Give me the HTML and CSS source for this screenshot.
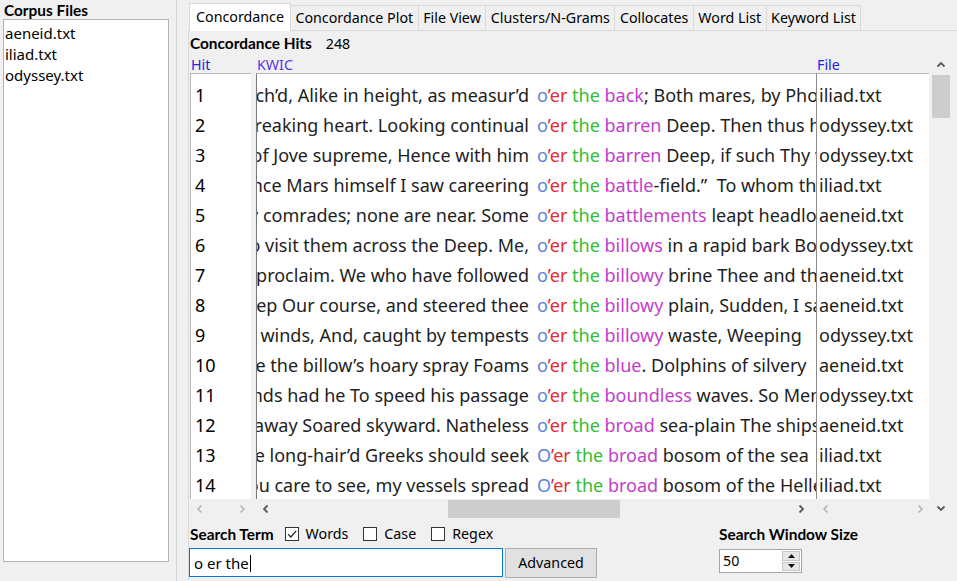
FILE: index.html
```html
<!DOCTYPE html>
<html>
<head>
<meta charset="utf-8">
<title>AntConc</title>
<link rel="stylesheet" href="styles.css">
</head>
<body>
<div class="app">
  <aside class="corpus">
    <div class="label">Corpus Files</div>
    <div class="file-list">
      <div class="file-item">aeneid.txt</div>
      <div class="file-item">iliad.txt</div>
      <div class="file-item">odyssey.txt</div>
    </div>
    <div class="label total">Total No.</div>
  </aside>
  <main class="main">
    <nav class="tabs">
      <div class="tab active">Concordance</div>
      <div class="tab">Concordance Plot</div>
      <div class="tab">File View</div>
      <div class="tab">Clusters/N-Grams</div>
      <div class="tab">Collocates</div>
      <div class="tab">Word List</div>
      <div class="tab">Keyword List</div>
    </nav>
    <section class="pane">
      <div class="hits"><span class="label">Concordance Hits</span><span class="hit-count">248</span></div>
      <div class="results">
        <div class="col col-hit">
          <div class="col-head">Hit</div>
          <div class="col-body">
            <div class="row">1</div><div class="row">2</div><div class="row">3</div><div class="row">4</div>
            <div class="row">5</div><div class="row">6</div><div class="row">7</div><div class="row">8</div>
            <div class="row">9</div><div class="row">10</div><div class="row">11</div><div class="row">12</div>
            <div class="row">13</div><div class="row">14</div><div class="row">15</div>
          </div>
          <div class="hscroll">
            <span class="sb-btn off"><svg width="7" height="10" viewBox="0 0 7 10"><path d="M5.5 1.5 L2 5 L5.5 8.5" fill="none" stroke="currentColor" stroke-width="1.5"/></svg></span>
            <span class="track"></span>
            <span class="sb-btn off"><svg width="7" height="10" viewBox="0 0 7 10"><path d="M1.5 1.5 L5 5 L1.5 8.5" fill="none" stroke="currentColor" stroke-width="1.5"/></svg></span>
          </div>
        </div>
        <div class="col col-kwic">
          <div class="col-head kwic-head">KWIC</div>
          <div class="col-body">
            <div class="kw-row"><span class="lc">so match’d, Alike in height, as measur’d</span><span class="rc"><span class="k1">o</span><span class="k2">’er</span> <span class="k3">the</span> <span class="k4">back</span>; Both mares, by Phoebus in Pieria bred</span></div>
            <div class="kw-row"><span class="lc">with breaking heart. Looking continual</span><span class="rc"><span class="k1">o</span><span class="k2">’er</span> <span class="k3">the</span> <span class="k4">barren</span> Deep. Then thus he spake</span></div>
            <div class="kw-row"><span class="lc">son of Jove supreme, Hence with him</span><span class="rc"><span class="k1">o</span><span class="k2">’er</span> <span class="k3">the</span> <span class="k4">barren</span> Deep, if such Thy will</span></div>
            <div class="kw-row"><span class="lc">Once Mars himself I saw careering</span><span class="rc"><span class="k1">o</span><span class="k2">’er</span> <span class="k3">the</span> <span class="k4">battle</span>-field.”&nbsp; To whom the</span></div>
            <div class="kw-row"><span class="lc">my comrades; none are near. Some</span><span class="rc"><span class="k1">o</span><span class="k2">’er</span> <span class="k3">the</span> <span class="k4">battlements</span> leapt headlong</span></div>
            <div class="kw-row"><span class="lc">to visit them across the Deep. Me,</span><span class="rc"><span class="k1">o</span><span class="k2">’er</span> <span class="k3">the</span> <span class="k4">billows</span> in a rapid bark Bore</span></div>
            <div class="kw-row"><span class="lc">proclaim. We who have followed</span><span class="rc"><span class="k1">o</span><span class="k2">’er</span> <span class="k3">the</span> <span class="k4">billowy</span> brine Thee and thy</span></div>
            <div class="kw-row"><span class="lc">Deep Our course, and steered thee</span><span class="rc"><span class="k1">o</span><span class="k2">’er</span> <span class="k3">the</span> <span class="k4">billowy</span> plain, Sudden, I saw</span></div>
            <div class="kw-row"><span class="lc">the winds, And, caught by tempests</span><span class="rc"><span class="k1">o</span><span class="k2">’er</span> <span class="k3">the</span> <span class="k4">billowy</span> waste, Weeping</span></div>
            <div class="kw-row"><span class="lc">where the billow’s hoary spray Foams</span><span class="rc"><span class="k1">o</span><span class="k2">’er</span> <span class="k3">the</span> <span class="k4">blue</span>. Dolphins of silvery</span></div>
            <div class="kw-row"><span class="lc">winds had he To speed his passage</span><span class="rc"><span class="k1">o</span><span class="k2">’er</span> <span class="k3">the</span> <span class="k4">boundless</span> waves. So Menelaus</span></div>
            <div class="kw-row"><span class="lc">away Soared skyward. Natheless</span><span class="rc"><span class="k1">o</span><span class="k2">’er</span> <span class="k3">the</span> <span class="k4">broad</span> sea-plain The ships</span></div>
            <div class="kw-row"><span class="lc">the long-hair’d Greeks should seek</span><span class="rc"><span class="k1">O</span><span class="k2">’er</span> <span class="k3">the</span> <span class="k4">broad</span> bosom of the sea</span></div>
            <div class="kw-row"><span class="lc">you care to see, my vessels spread</span><span class="rc"><span class="k1">O</span><span class="k2">’er</span> <span class="k3">the</span> <span class="k4">broad</span> bosom of the Hellespont</span></div>
          </div>
          <div class="hscroll">
            <span class="sb-btn"><svg width="7" height="10" viewBox="0 0 7 10"><path d="M5.5 1.5 L2 5 L5.5 8.5" fill="none" stroke="currentColor" stroke-width="1.8"/></svg></span>
            <span class="track"><span class="hthumb"></span></span>
            <span class="sb-btn kwic-right"><svg width="7" height="10" viewBox="0 0 7 10"><path d="M1.5 1.5 L5 5 L1.5 8.5" fill="none" stroke="currentColor" stroke-width="1.8"/></svg></span>
          </div>
        </div>
        <div class="col col-file">
          <div class="col-head">File</div>
          <div class="col-body">
            <div class="row">iliad.txt</div><div class="row">odyssey.txt</div><div class="row">odyssey.txt</div>
            <div class="row">iliad.txt</div><div class="row">aeneid.txt</div><div class="row">odyssey.txt</div>
            <div class="row">aeneid.txt</div><div class="row">aeneid.txt</div><div class="row">odyssey.txt</div>
            <div class="row">aeneid.txt</div><div class="row">odyssey.txt</div><div class="row">aeneid.txt</div>
            <div class="row">iliad.txt</div><div class="row">iliad.txt</div>
          </div>
          <div class="hscroll">
            <span class="sb-btn off"><svg width="7" height="10" viewBox="0 0 7 10"><path d="M5.5 1.5 L2 5 L5.5 8.5" fill="none" stroke="currentColor" stroke-width="1.5"/></svg></span>
            <span class="track"></span>
            <span class="sb-btn off"><svg width="7" height="10" viewBox="0 0 7 10"><path d="M1.5 1.5 L5 5 L1.5 8.5" fill="none" stroke="currentColor" stroke-width="1.5"/></svg></span>
          </div>
        </div>
        <div class="vscroll">
          <span class="vbtn"><svg width="10" height="7" viewBox="0 0 10 7"><path d="M1.5 5.5 L5 2 L8.5 5.5" fill="none" stroke="currentColor" stroke-width="1.8"/></svg></span>
          <span class="vtrack"><span class="vthumb"></span></span>
          <span class="vbtn vbtn-down"><svg width="10" height="7" viewBox="0 0 10 7"><path d="M1.5 1.5 L5 5 L8.5 1.5" fill="none" stroke="currentColor" stroke-width="1.8"/></svg></span>
        </div>
      </div>
      <div class="search">
        <div class="search-left">
          <div class="opts">
            <span class="label">Search Term</span>
            <span class="opt first"><span class="cb"><svg width="12" height="12" viewBox="0 0 12 12"><path d="M2 6.2 L4.8 9 L10.2 2.8" fill="none" stroke="#222" stroke-width="1.2"/></svg></span>Words</span>
            <span class="opt"><span class="cb"></span>Case</span>
            <span class="opt"><span class="cb"></span>Regex</span>
          </div>
          <div class="entry">
            <div class="input">o er the<span class="caret"></span></div>
            <div class="button">Advanced</div>
          </div>
        </div>
        <div class="search-right">
          <div class="label">Search Window Size</div>
          <div class="spinner">
            <span class="spin-val">50</span>
            <span class="spin-btns">
              <span class="spin-btn"><svg width="7" height="4" viewBox="0 0 7 4"><path d="M0 4 L3.5 0 L7 4 Z" fill="#111"/></svg></span>
              <span class="spin-btn"><svg width="7" height="4" viewBox="0 0 7 4"><path d="M0 0 L3.5 4 L7 0 Z" fill="#111"/></svg></span>
            </span>
          </div>
        </div>
      </div>
    </section>
  </main>
</div>
</body>
</html>
```

FILE: styles.css
```css
* { box-sizing: border-box; }
html, body { margin: 0; padding: 0; }
body {
  width: 957px;
  height: 581px;
  overflow: hidden;
  background: #f0f0f0;
  font-family: "Noto Sans", "Open Sans", sans-serif;
  font-size: 14.25px;
  color: #000;
}
.app { display: flex; height: 581px; }

.label {
  font-family: "Lato", "Noto Sans", sans-serif;
  font-weight: bold;
  font-size: 15.4px;
  color: #000;
}

/* left corpus panel */
.corpus {
  width: 177px;
  flex: none;
  border-right: 1px solid #d5d5d5;
  padding-left: 3px;
  display: flex;
  flex-direction: column;
}
.corpus > .label { line-height: 18px; margin-top: 1px; padding-left: 1px; }
.file-list {
  width: 166px;
  height: 543px;
  flex: none;
  background: #fff;
  border: 1px solid #b4b4b4;
  padding: 3px 0 0 1px;
  font-size: 15px;
  line-height: 21px;
}
.corpus > .total { margin-top: 19px; }

/* main area */
.main {
  flex: 1;
  min-width: 0;
  padding-left: 11px;
  display: flex;
  flex-direction: column;
}
.tabs {
  display: flex;
  align-items: flex-end;
  height: 30px;
  padding-left: 1px;
  flex: none;
}
.tab {
  height: 25px;
  line-height: 24px;
  padding: 0 4.5px;
  border: 1px solid #d9d9d9;
  border-left: none;
  border-bottom: none;
  background: #f0f0f0;
  white-space: nowrap;
}
.tab.active {
  height: 28px;
  line-height: 25px;
  margin-bottom: -1px;
  padding: 0 6px;
  background: #fff;
  border-left: 1px solid #d9d9d9;
  position: relative;
  z-index: 1;
}
.pane {
  flex: 1;
  border-top: 1px solid #d9d9d9;
  border-left: 1px solid #d9d9d9;
  padding-left: 1px;
  display: flex;
  flex-direction: column;
}
.hits { height: 24px; line-height: 24px; display: flex; align-items: baseline; white-space: nowrap; }
.hits .label { line-height: 24px; }
.hit-count { margin-left: 14px; }

/* results table */
.results { display: flex; height: 464px; flex: none; }
.col { display: flex; flex-direction: column; }
.col-hit { width: 61px; margin-right: 5px; }
.col-kwic { width: 560px; }
.col-file { width: 113px; }
.col-head {
  height: 18px;
  padding: 1px 0 0 1px;
  line-height: 17px;
  color: #2424e0;
  white-space: nowrap;
}
.kwic-head { color: #5a34e6; }
.col-body {
  flex: 1;
  background: #fff;
  border-top: 1px solid #b9b9b9;
  border-left: 1px solid #b9b9b9;
  overflow: hidden;
  padding-top: 6px;
  font-size: 18px;
  color: #1e1e1e;
}
.col-kwic .col-body { border-left-color: #7a7a7a; }
.col-file .col-body { border-left-color: #8c8c8c; }
.row { height: 30px; line-height: 30px; white-space: nowrap; }
.col-hit .row { padding-left: 4px; color: #000; }
.col-file .row { padding-left: 2px; }
.kw-row { display: flex; height: 30px; line-height: 30px; white-space: nowrap; }
.lc {
  width: 272px;
  flex: none;
  display: flex;
  justify-content: flex-end;
  overflow: hidden;
}
.rc { margin-left: 8px; flex: 1; min-width: 0; overflow: hidden; }
.k1 { color: #5b82e0; }
.k2 { color: #e62a30; }
.k3 { color: #33bd33; }
.k4 { color: #c23ec8; }

.hscroll { height: 20px; display: flex; align-items: stretch; flex: none; }
.sb-btn {
  width: 18px;
  flex: none;
  display: flex;
  align-items: center;
  justify-content: center;
  color: #5a5a5a;
}
.sb-btn.off { color: #b3b3b3; }
.sb-btn.kwic-right { margin-right: 6px; }
.track { flex: 1; display: flex; align-items: center; }
.hthumb { width: 172px; height: 18px; margin-left: 174px; background: #cdcdcd; }

.vscroll {
  width: 20px;
  margin-left: 2px;
  display: flex;
  flex-direction: column;
}
.vbtn {
  height: 18px;
  flex: none;
  display: flex;
  align-items: center;
  justify-content: center;
  color: #5a5a5a;
}
.vbtn-down { height: 22px; }
.vtrack { flex: 1; padding: 2px 1px 0 1px; }
.vthumb { display: block; height: 43px; background: #cdcdcd; }

/* search area */
.search { display: flex; margin-top: 6px; }
.search-left { width: 529px; flex: none; }
.opts { display: flex; align-items: center; height: 18px; white-space: nowrap; }
.opts .label { line-height: 18px; }
.opt { display: flex; align-items: center; margin-left: 15px; line-height: 18px; }
.opt.first { margin-left: 11px; }
.cb {
  width: 14px;
  height: 14px;
  border: 1px solid #333;
  background: #fff;
  margin-right: 7px;
  display: flex;
  align-items: center;
  justify-content: center;
}
.entry { display: flex; margin-top: 5px; margin-left: -1px; }
.input {
  width: 314px;
  height: 29px;
  border: 1px solid #0078d7;
  background: #fff;
  padding: 2px 0 0 4px;
  font-size: 15px;
  line-height: 25px;
  display: flex;
  align-items: center;
  white-space: pre;
}
.caret { display: inline-block; width: 1px; height: 17px; background: #000; margin-left: 1px; }
.button {
  width: 92px;
  height: 30px;
  margin-left: 2px;
  background: #e1e1e1;
  border: 1px solid #adadad;
  text-align: center;
  line-height: 27px;
}
.search-right .label { line-height: 18px; white-space: nowrap; }
.spinner {
  margin-top: 6px;
  width: 83px;
  height: 24px;
  background: #fff;
  border: 1px solid #a5a5a5;
  display: flex;
  justify-content: space-between;
}
.spin-val { padding-left: 3px; line-height: 21px; }
.spin-btns { display: flex; flex-direction: column; padding: 1px 1px 1px 0; gap: 1px; }
.spin-btn {
  width: 18px;
  flex: 1;
  background: #e6e6e6;
  border: 1px solid #c6c6c6;
  display: flex;
  align-items: center;
  justify-content: center;
}
```
